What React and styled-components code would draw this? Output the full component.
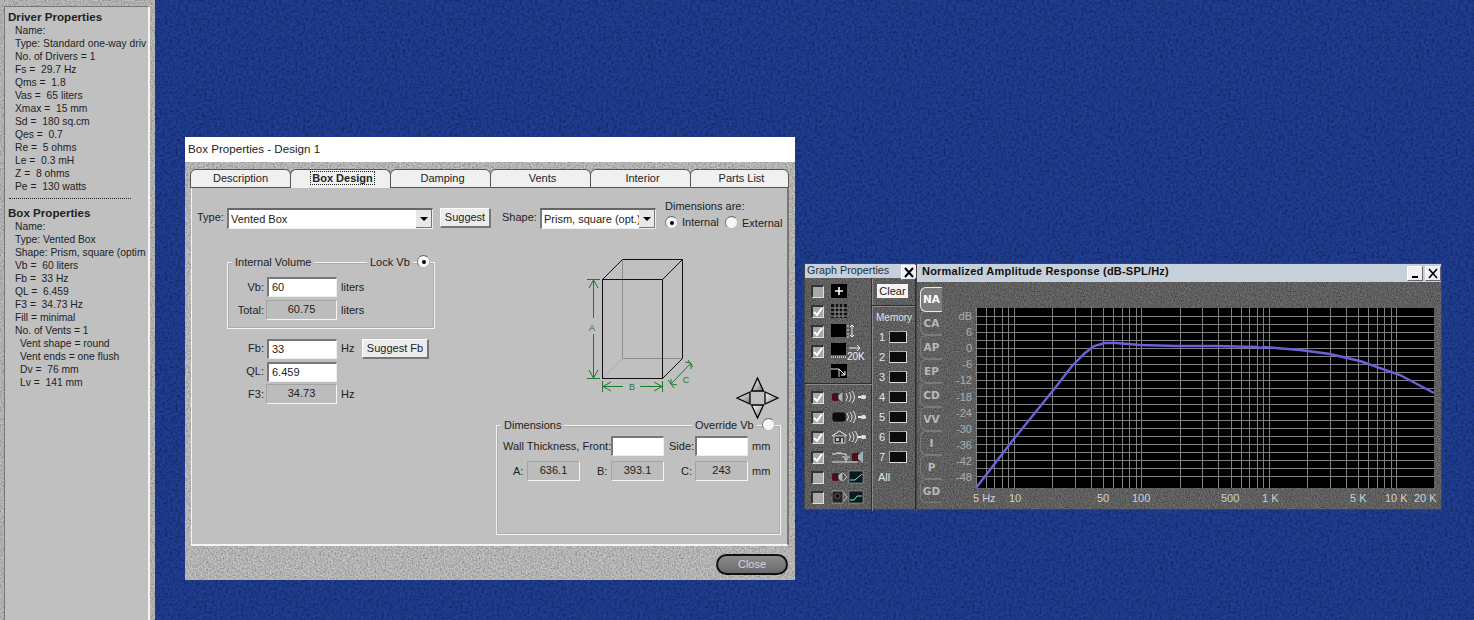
import React from "react";
import styled, { createGlobalStyle, css } from "styled-components";

const noise = (freq, alpha) =>
  `url("data:image/svg+xml,%3Csvg xmlns='http://www.w3.org/2000/svg' width='256' height='256'%3E%3Cfilter id='n'%3E%3CfeTurbulence type='fractalNoise' baseFrequency='${freq}' numOctaves='2' seed='4' stitchTiles='stitch'/%3E%3CfeColorMatrix values='0 0 0 0 0 0 0 0 0 0 0 0 0 0 0 1.6 0 0 0 -0.62'/%3E%3C/filter%3E%3Crect width='256' height='256' filter='url(%23n)' opacity='${alpha}'/%3E%3C/svg%3E")`;

const noiseLight = (freq, alpha) =>
  `url("data:image/svg+xml,%3Csvg xmlns='http://www.w3.org/2000/svg' width='256' height='256'%3E%3Cfilter id='n'%3E%3CfeTurbulence type='fractalNoise' baseFrequency='${freq}' numOctaves='2' seed='9' stitchTiles='stitch'/%3E%3CfeColorMatrix values='0 0 0 0 1 0 0 0 0 1 0 0 0 0 1 1.6 0 0 0 -0.62'/%3E%3C/filter%3E%3Crect width='256' height='256' filter='url(%23n)' opacity='${alpha}'/%3E%3C/svg%3E")`;

const GlobalStyle = createGlobalStyle`
  html, body {
    margin: 0;
    padding: 0;
    overflow: hidden;
  }
  body {
    font-family: "Liberation Sans", Arial, sans-serif;
  }
`;

const at = css`
  position: absolute;
  left: ${({ $x }) => $x}px;
  top: ${({ $y }) => $y}px;
`;

const Desktop = styled.div`
  position: relative;
  width: 1474px;
  height: 620px;
  overflow: hidden;
  background-color: #1f3d92;
  background-image: ${noise(0.38, 0.45)};
`;

/* left properties strip */
const SideFrame = styled.div`
  position: absolute;
  left: 0;
  top: 0;
  width: 155px;
  height: 620px;
  background-color: #b4b4b4;
  background-image: ${noise(0.7, 0.35)}, ${noiseLight(0.7, 0.5)};
`;

const SidePanel = styled.div`
  position: absolute;
  left: 4px;
  top: 6px;
  width: 146px;
  height: 614px;
  box-sizing: border-box;
  padding: 2px 0 0 3px;
  background: #c0c0c0;
  border-left: 1px solid #777;
  border-top: 1px solid #777;
  border-right: 2px solid #f4f4f4;
  overflow: hidden;
`;

const SideHead = styled.div`
  font-size: 11.6px;
  font-weight: bold;
  line-height: 15px;
  color: #222;
  white-space: nowrap;
`;

const SideLine = styled.div`
  font-size: 10.3px;
  line-height: 13px;
  height: 13px;
  color: #222;
  white-space: pre;
  padding-left: ${({ $deep }) => ($deep ? 12 : 7)}px;
`;

const SideRule = styled.div`
  width: 122px;
  margin: 5px 0 6px 1px;
  border-top: 1px dotted #222;
`;

/* box properties dialog */
const Dialog = styled.div`
  position: absolute;
  left: 185px;
  top: 137px;
  width: 610px;
  height: 443px;
  background-color: #b8b8b8;
  background-image: ${noise(0.6, 0.35)}, ${noiseLight(0.6, 0.5)};
`;

const DialogTitle = styled.div`
  height: 25px;
  background: #fff;
  font-size: 11.6px;
  line-height: 24px;
  padding-left: 3px;
  color: #222;
`;

const Tab = styled.div`
  ${at}
  top: 32px;
  width: ${({ $w }) => $w}px;
  height: 19px;
  box-sizing: border-box;
  padding-left: ${({ $shift }) => ($shift ? 4 : 0)}px;
  background: #f0f0f0;
  border: 1px solid #555;
  border-bottom: ${({ $active }) => ($active ? "none" : "1px solid #555")};
  border-radius: 6px 6px 0 0;
  font-size: 11px;
  font-weight: ${({ $active }) => ($active ? "bold" : "normal")};
  line-height: 17px;
  text-align: center;
  color: #222;
  z-index: ${({ $active }) => ($active ? 2 : 1)};
`;

const TabFocus = styled.span`
  border: 1px dotted #222;
  padding: 0 1px;
`;

const TabPanel = styled.div`
  position: absolute;
  left: 6px;
  top: 50px;
  width: 598px;
  height: 359px;
  box-sizing: border-box;
  background: #c0c0c0;
  border: 1px solid #f4f4f4;
  border-top: 1px solid #666;
  border-right: 2px solid #777;
  border-bottom: 2px solid #f4f4f4;
`;

const Layer = styled.div`
  position: absolute;
  left: -192px;
  top: -188px;
  font-size: 11px;
  color: #222;
`;

const Label = styled.span`
  ${at}
  font-size: 11px;
  line-height: 13px;
  white-space: nowrap;
  color: #222;
`;

const RightLabel = styled.span`
  position: absolute;
  left: ${({ $right }) => $right - 60}px;
  top: ${({ $y }) => $y}px;
  width: 60px;
  font-size: 11px;
  line-height: 13px;
  text-align: right;
  white-space: nowrap;
  color: #222;
`;

const Combo = styled.div`
  ${at}
  width: ${({ $w }) => $w}px;
  height: 21px;
  box-sizing: border-box;
  background: #fff;
  border-top: 2px solid #666;
  border-left: 2px solid #777;
  border-right: 1px solid #eee;
  border-bottom: 1px solid #eee;
  font-size: 11px;
  line-height: 18px;
  padding-left: 2px;
  color: #222;
  white-space: nowrap;
  overflow: hidden;
`;

const ComboArrow = styled.div`
  position: absolute;
  right: 0;
  top: 0;
  width: 16px;
  height: 18px;
  box-sizing: border-box;
  background: #e8e8e8;
  border-right: 1px solid #777;
  border-bottom: 1px solid #777;
  &::after {
    content: "";
    position: absolute;
    left: 4px;
    top: 7px;
    border-left: 4px solid transparent;
    border-right: 4px solid transparent;
    border-top: 4px solid #000;
  }
`;

const PushButton = styled.div`
  ${at}
  width: ${({ $w }) => $w}px;
  height: 20px;
  box-sizing: border-box;
  background: #ececec;
  border-top: 1px solid #fff;
  border-left: 1px solid #fff;
  border-right: 2px solid #777;
  border-bottom: 2px solid #777;
  font-size: 11px;
  line-height: 17px;
  text-align: center;
  color: #222;
`;

const Input = styled.div`
  ${at}
  width: ${({ $w }) => $w || 70}px;
  height: 20px;
  box-sizing: border-box;
  background: #fff;
  border-top: 2px solid #777;
  border-left: 2px solid #777;
  border-right: 1px solid #eee;
  border-bottom: 1px solid #eee;
  font-size: 11px;
  line-height: 17px;
  padding-left: 3px;
  color: #222;
`;

const ReadOut = styled.div`
  ${at}
  width: ${({ $w }) => $w || 71}px;
  height: 20px;
  box-sizing: border-box;
  background: #bcbcbc;
  border-top: 1px solid #a4a4a4;
  border-left: 1px solid #a4a4a4;
  border-right: 1px solid #f4f4f4;
  border-bottom: 1px solid #f4f4f4;
  font-size: 11px;
  line-height: 16px;
  text-align: center;
  color: #222;
`;

const Group = styled.div`
  ${at}
  width: ${({ $w }) => $w}px;
  height: ${({ $h }) => $h}px;
  box-sizing: border-box;
  border: 1px solid #f4f4f4;
  outline: 1px solid #acacac;
  outline-offset: -2px;
`;

const GroupLabel = styled.span`
  ${at}
  background: #c0c0c0;
  padding: 0 3px;
  font-size: 11px;
  line-height: 13px;
  white-space: nowrap;
  color: #222;
`;

const Radio = styled.div`
  ${at}
  width: 11px;
  height: 11px;
  border-radius: 50%;
  background: #f6f6f6;
  border: 1px solid #bbb;
  border-top-color: #666;
  border-left-color: #777;
  &::after {
    content: "";
    display: ${({ $on }) => ($on ? "block" : "none")};
    width: 4px;
    height: 4px;
    margin: 3.5px;
    border-radius: 50%;
    background: #000;
  }
`;

const CloseButton = styled.div`
  ${at}
  width: 72px;
  height: 21px;
  box-sizing: border-box;
  border: 2px solid #111;
  border-radius: 11px;
  background: linear-gradient(#8c8c8c, #6a6a6a);
  font-size: 11px;
  line-height: 17px;
  text-align: center;
  color: #d8d8d8;
`;

/* dark graph windows */
const DarkWindow = styled.div`
  ${at}
  width: ${({ $w }) => $w}px;
  height: 247px;
  box-sizing: border-box;
  background-color: #626262;
  background-image: ${noise(0.8, 0.5)}, ${noiseLight(0.7, 0.22)};
  border: 1px solid #444;
`;

const DarkTitle = styled.div`
  height: ${({ $h }) => $h}px;
  background: #c6d0da;
  font-size: ${({ $bold }) => ($bold ? 11 : 10.8)}px;
  line-height: ${({ $h, $bold }) => ($bold ? $h - 3 : $h - 2)}px;
  font-weight: ${({ $bold }) => ($bold ? "bold" : "normal")};
  letter-spacing: ${({ $bold }) => ($bold ? "0.22px" : "0")};
  padding-left: ${({ $bold }) => ($bold ? 5 : 2)}px;
  color: ${({ $bold }) => ($bold ? "#111" : "#1c3040")};
  white-space: nowrap;
`;

const CornerButton = styled.div`
  ${at}
  width: 16px;
  height: 15px;
  box-sizing: border-box;
  background: #eef0f2;
  border: 1px solid #fff;
  border-right-color: #667;
  border-bottom-color: #667;
  color: #000;
  svg {
    display: block;
  }
`;

const Divider = styled.div`
  ${at}
  width: ${({ $w }) => $w || 1}px;
  height: ${({ $h }) => $h || 1}px;
  background: #2e2e2e;
  box-shadow: 1px 1px 0 #8a8a8a;
`;

const Check = styled.div`
  ${at}
  left: 6px;
  width: 13px;
  height: 13px;
  box-sizing: border-box;
  background: #a8a8a8;
  border-top: 2px solid #333;
  border-left: 2px solid #333;
  border-right: 1px solid #ddd;
  border-bottom: 1px solid #ddd;
  svg {
    display: block;
  }
`;

const ClearButton = styled.div`
  ${at}
  width: 31px;
  height: 14px;
  background: #f4f4f4;
  font-size: 11px;
  line-height: 14px;
  text-align: center;
  color: #222;
`;

const DarkText = styled.span`
  ${at}
  font-size: ${({ $size }) => $size || 11}px;
  line-height: 13px;
  color: #e4e4e4;
  white-space: nowrap;
`;

const MemorySlot = styled.div`
  ${at}
  width: 18px;
  height: 12px;
  box-sizing: border-box;
  background: #0c0c0c;
  border: 1px solid #aaa;
  border-right-color: #ddd;
  border-bottom-color: #ddd;
`;

const GraphIcon = styled.svg`
  ${at}
  display: block;
`;

const SideTab = styled.div`
  ${at}
  left: 3px;
  width: 22px;
  height: ${({ $active }) => ($active ? 25 : 24)}px;
  box-sizing: border-box;
  background: ${({ $active }) => ($active ? "#7c7c7c" : "transparent")};
  border: 1px solid ${({ $active }) => ($active ? "#e8e8e8" : "#7a7a7a")};
  border-right: none;
  border-radius: 6px 0 0 6px;
  font-family: "DejaVu Sans", sans-serif;
  font-size: 10.5px;
  font-weight: bold;
  line-height: 22px;
  text-align: center;
  color: ${({ $active }) => ($active ? "#fff" : "#b8b8b8")};
  z-index: ${({ $active }) => ($active ? 2 : 1)};
`;

const AxisY = styled.span`
  position: absolute;
  left: 20px;
  top: ${({ $y }) => $y}px;
  width: 35px;
  text-align: right;
  font-size: 11px;
  line-height: 13px;
  color: #adadad;
`;

const AxisX = styled.span`
  position: absolute;
  left: ${({ $x }) => $x}px;
  top: 228px;
  font-size: 11px;
  line-height: 13px;
  color: #cfcfcf;
  white-space: nowrap;
`;

const PlotBox = styled.svg`
  position: absolute;
  left: 59px;
  top: 44px;
  display: block;
  background: #000;
`;

const driverLines = [
  "Name:",
  "Type: Standard one-way driv",
  "No. of Drivers = 1",
  "Fs =  29.7 Hz",
  "Qms =  1.8",
  "Vas =  65 liters",
  "Xmax =  15 mm",
  "Sd =  180 sq.cm",
  "Qes =  0.7",
  "Re =  5 ohms",
  "Le =  0.3 mH",
  "Z =  8 ohms",
  "Pe =  130 watts",
];

const boxLines = [
  "Name:",
  "Type: Vented Box",
  "Shape: Prism, square (optim",
  "Vb =  60 liters",
  "Fb =  33 Hz",
  "QL =  6.459",
  "F3 =  34.73 Hz",
  "Fill = minimal",
  "No. of Vents = 1",
];

const ventLines = ["Vent shape = round", "Vent ends = one flush", "Dv =  76 mm", "Lv =  141 mm"];

const tabs = [
  { name: "Description", x: 5, w: 101 },
  { name: "Box Design", x: 105, w: 101, active: true, shift: true },
  { name: "Damping", x: 205, w: 101, shift: true },
  { name: "Vents", x: 305, w: 101, shift: true },
  { name: "Interior", x: 405, w: 101, shift: true },
  { name: "Parts List", x: 505, w: 99, shift: true },
];

const checks = [
  { y: 21, on: false },
  { y: 41, on: true },
  { y: 61, on: true },
  { y: 81, on: true },
  { y: 127, on: true },
  { y: 147, on: true },
  { y: 167, on: true },
  { y: 187, on: true },
  { y: 207, on: false },
  { y: 227, on: false },
];

const graphTabs = ["NA", "CA", "AP", "EP", "CD", "VV", "I", "P", "GD"];
const dbLabels = ["dB", "6", "0", "-6", "-12", "-18", "-24", "-30", "-36", "-42", "-48"];

const xLabels = [
  { t: "5 Hz", x: 56 },
  { t: "10", x: 92 },
  { t: "50", x: 180 },
  { t: "100", x: 215 },
  { t: "500", x: 304 },
  { t: "1 K", x: 345 },
  { t: "5 K", x: 433 },
  { t: "10 K", x: 468 },
  { t: "20 K", x: 497 },
];

const freqs = [];
[1, 10, 100, 1000, 10000].forEach((d) => {
  [1, 2, 3, 4, 5, 6, 7, 8, 9].forEach((m) => {
    const f = d * m;
    if (f >= 5 && f <= 20000) freqs.push(f);
  });
});

const freqX = (f) => (Math.log10(f) - Math.log10(5)) * 127.5;

const curve =
  "0,180 37,132 79,80 96,58 109,45 118,38 129,35 140,35 164,37 200,38 240,38 281,39 284,40 288,39 324,42 354,46 384,53 424,67 458,85";

const Tick = () => (
  <svg width="10" height="10" viewBox="0 0 10 10">
    <polyline points="1,5 4,8 9,1" fill="none" stroke="#fff" strokeWidth="2" />
  </svg>
);

const Speaker = ({ x }) => (
  <g transform={`translate(${x},0)`}>
    <rect x="0" y="3" width="7" height="8" rx="2" fill="#4a0f18" />
    <polygon points="6,5 11,1 11,13 6,9" fill="#aab4b8" stroke="#111" strokeWidth="0.6" />
  </g>
);

const Waves = ({ x }) => (
  <g fill="none" stroke="#eee" strokeWidth="0.9" transform={`translate(${x},0)`}>
    <path d="M0 3q3 4 0 8" />
    <path d="M3 2q4 5 0 10" />
    <path d="M6 1q5 6 0 12" />
  </g>
);

const Plug = ({ x }) => (
  <g transform={`translate(${x},0)`}>
    <rect x="0" y="6" width="3" height="2" fill="#eee" />
    <rect x="3" y="5" width="5" height="4" rx="1.5" fill="#ddd" />
  </g>
);

const MiniGraph = ({ x, step }) => (
  <g transform={`translate(${x},0)`}>
    <rect x="0" y="1" width="14" height="12" fill="#0c1a1c" stroke="#bbb" strokeWidth="0.5" />
    <polyline
      points={step ? "1,10 5,10 8,6 13,6" : "1,10 6,10 13,4"}
      fill="none"
      stroke="#7fe0d0"
      strokeWidth="1"
    />
  </g>
);

const BoxDrawing = () => (
  <GraphIcon $x={585} $y={250} width="115" height="150" viewBox="585 250 115 150">
    <g fill="none" stroke="#8c8c8c" strokeWidth="1">
      <path d="M622.5 259.5V358.5H682.5" />
      <path d="M622.5 358.5L602.5 378.5" stroke="#a8a8a8" />
    </g>
    <g fill="none" stroke="#111" strokeWidth="1">
      <rect x="602.5" y="279.5" width="60" height="99" />
      <path d="M602.5 279.5L622.5 259.5H682.5V358.5L662.5 378.5" />
      <path d="M662.5 279.5L682.5 259.5" />
    </g>
    <g fill="none" stroke="#1d7a2c" strokeWidth="1">
      <path d="M587 279.5H600M587 378.5H600" />
      <path d="M593.5 280V318M593.5 334V378" />
      <path d="M589 288L593.5 280L598 288M589 370L593.5 378L598 370" />
      <path d="M602.5 381V392M662.5 381V392" />
      <path d="M603 386.5H623M640 386.5H662" />
      <path d="M611 382L603 386.5L611 391M654 382L662 386.5L654 391" />
      <path d="M671 384L691 363" />
      <path d="M671 379L671 384L677 385M685 362L691 363L691 369" />
      <path d="M668 380L674 388M688 360L693 367" />
    </g>
    <g fill="#1d7a2c" fontFamily="Liberation Sans, sans-serif" fontSize="9" textAnchor="middle">
      <text x="592" y="331">A</text>
      <text x="632" y="390">B</text>
      <text x="686" y="383">C</text>
    </g>
  </GraphIcon>
);

const NavArrows = () => (
  <GraphIcon $x={735} $y={376} width="45" height="44" viewBox="735 376 45 44">
    <defs>
      <linearGradient id="navUp" x1="0" y1="0" x2="1" y2="1">
        <stop offset="0" stopColor="#fff" />
        <stop offset="1" stopColor="#777" />
      </linearGradient>
    </defs>
    <g fill="url(#navUp)" stroke="#000" strokeWidth="1.3">
      <polygon points="757.5,378 751.5,391 763.5,391" />
      <polygon points="757.5,418 751.5,405 763.5,405" />
      <polygon points="737,398 750,392 750,404" />
      <polygon points="778,398 765,392 765,404" />
    </g>
  </GraphIcon>
);

const PlotChart = () => (
  <PlotBox width="458" height="180" viewBox="0 0 458 180">
    <g stroke="#808080" strokeWidth="1" shapeRendering="crispEdges">
      {Array.from({ length: 21 }, (_, i) => (
        <line key={i} x1="0" x2="458" y1={8 * (i + 1) + 0.5} y2={8 * (i + 1) + 0.5} />
      ))}
      {freqs.map((f) => (
        <line key={f} x1={freqX(f)} x2={freqX(f)} y1="0" y2="180" />
      ))}
    </g>
    <polyline points={curve} fill="none" stroke="#6a62d8" strokeWidth="2.4" />
  </PlotBox>
);

const GraphIcons = () => (
  <>
    <GraphIcon $x={26} $y={20} width="16" height="14" viewBox="0 0 16 14">
      <rect width="16" height="14" fill="#000" />
      <path d="M8 3V11M4 7H12" stroke="#fff" strokeWidth="1.6" />
    </GraphIcon>
    <GraphIcon $x={26} $y={40} width="16" height="14" viewBox="0 0 16 14">
      <rect width="16" height="14" fill="#111" />
      <path d="M0 4H16M0 8H16M0 12H16M4 0V14M8 0V14M12 0V14" stroke="#999" strokeWidth="1" />
    </GraphIcon>
    <GraphIcon $x={26} $y={60} width="24" height="14" viewBox="0 0 24 14">
      <rect width="15" height="13" fill="#000" />
      <path d="M16 2h2M16 6h2M16 10h2M16 13h2" stroke="#ddd" strokeWidth="1" />
      <path d="M21 1V13M19 3L21 1L23 3M19 11L21 13L23 11" stroke="#eee" fill="none" strokeWidth="1" />
    </GraphIcon>
    <GraphIcon $x={26} $y={79} width="34" height="18" viewBox="0 0 34 18">
      <rect width="15" height="12" fill="#000" />
      <path d="M0 14H15" stroke="#ddd" strokeWidth="1.5" strokeDasharray="1 1" />
      <path d="M18 5H29M26 2L29 5L26 8" stroke="#eee" fill="none" strokeWidth="1" />
      <text x="16" y="17" fontSize="10" fill="#eee" fontFamily="Liberation Sans, sans-serif">
        20K
      </text>
    </GraphIcon>
    <GraphIcon $x={26} $y={100} width="16" height="14" viewBox="0 0 16 14">
      <rect width="16" height="14" fill="#000" />
      <path d="M0 5H8V13" stroke="#ddd" fill="none" strokeWidth="1" />
      <path d="M8 5L14 11M14 7V11H10" stroke="#fff" fill="none" strokeWidth="1" />
    </GraphIcon>

    <GraphIcon $x={27} $y={126} width="36" height="14" viewBox="0 0 36 14">
      <Speaker x={0} />
      <Waves x={14} />
      <Plug x={26} />
    </GraphIcon>
    <GraphIcon $x={27} $y={146} width="36" height="14" viewBox="0 0 36 14">
      <rect x="0" y="2" width="14" height="10" rx="3" fill="#0c0c0c" stroke="#777" strokeWidth="0.6" />
      <Waves x={15} />
      <Plug x={26} />
    </GraphIcon>
    <GraphIcon $x={27} $y={166} width="36" height="14" viewBox="0 0 36 14">
      <path d="M0 6L7.5 1L15 6" fill="none" stroke="#eee" strokeWidth="1" />
      <rect x="2" y="6" width="11" height="7" fill="#333" stroke="#eee" strokeWidth="0.8" />
      <rect x="4" y="8" width="3" height="3" fill="#bbb" />
      <rect x="9" y="8" width="2" height="5" fill="#bbb" />
      <Waves x={17} />
      <Plug x={26} />
    </GraphIcon>
    <GraphIcon $x={27} $y={186} width="36" height="14" viewBox="0 0 36 14">
      <path d="M0 4H4q1-3 2 0q1-3 2 0q1-3 2 0H14M0 12H26M14 4V6M10 7H18M12 9H16M14 9V12" fill="none" stroke="#eee" strokeWidth="0.9" />
      <rect x="20" y="3" width="7" height="8" rx="1" fill="#4a0f18" />
      <polygon points="26,5 31,1 31,13 26,9" fill="#9fb0b4" />
    </GraphIcon>
    <GraphIcon $x={27} $y={206} width="36" height="14" viewBox="0 0 36 14">
      <Speaker x={0} />
      <path d="M11 3L15 7L11 11" fill="none" stroke="#ddd" strokeWidth="0.8" />
      <MiniGraph x={17} />
    </GraphIcon>
    <GraphIcon $x={27} $y={226} width="36" height="14" viewBox="0 0 36 14">
      <rect x="0" y="1" width="11" height="12" fill="#222" stroke="#ccc" strokeWidth="0.6" />
      <circle cx="5.5" cy="6" r="2.5" fill="#000" stroke="#999" strokeWidth="0.6" />
      <path d="M12 3L15 7L12 11" fill="none" stroke="#ddd" strokeWidth="0.8" />
      <MiniGraph x={17} step />
    </GraphIcon>
  </>
);

export default function App() {
  return (
    <Desktop>
      <GlobalStyle />

      <SideFrame>
        <SidePanel>
          <SideHead>Driver Properties</SideHead>
          {driverLines.map((l, i) => (
            <SideLine key={i}>{l}</SideLine>
          ))}
          <SideRule />
          <SideHead>Box Properties</SideHead>
          {boxLines.map((l, i) => (
            <SideLine key={i}>{l}</SideLine>
          ))}
          {ventLines.map((l, i) => (
            <SideLine key={i} $deep>
              {l}
            </SideLine>
          ))}
        </SidePanel>
      </SideFrame>

      <Dialog>
        <DialogTitle>Box Properties - Design 1</DialogTitle>
        {tabs.map((t) => (
          <Tab key={t.name} $x={t.x} $w={t.w} $active={t.active} $shift={t.shift}>
            {t.active ? <TabFocus>{t.name}</TabFocus> : t.name}
          </Tab>
        ))}
        <TabPanel>
          <Layer>
            <Label $x={197} $y={211}>Type:</Label>
            <Combo $x={227} $y={208} $w={206}>
              Vented Box
              <ComboArrow />
            </Combo>
            <PushButton $x={440} $y={208} $w={51}>Suggest</PushButton>

            <Label $x={502} $y={211}>Shape:</Label>
            <Combo $x={540} $y={208} $w={116}>
              Prism, square (opt.)
              <ComboArrow />
            </Combo>
            <Label $x={665} $y={200}>Dimensions are:</Label>
            <Radio $x={665} $y={216} $on />
            <Label $x={682} $y={216}>Internal</Label>
            <Radio $x={725} $y={216} />
            <Label $x={742} $y={217}>External</Label>

            <Group $x={227} $y={262} $w={208} $h={67} />
            <GroupLabel $x={232} $y={256}>Internal Volume</GroupLabel>
            <GroupLabel $x={367} $y={256}>Lock Vb</GroupLabel>
            <Radio $x={417} $y={255} $on />
            <RightLabel $right={264} $y={281}>Vb:</RightLabel>
            <Input $x={267} $y={277}>60</Input>
            <Label $x={341} $y={281}>liters</Label>
            <RightLabel $right={264} $y={304}>Total:</RightLabel>
            <ReadOut $x={266} $y={300}>60.75</ReadOut>
            <Label $x={341} $y={304}>liters</Label>

            <RightLabel $right={264} $y={342}>Fb:</RightLabel>
            <Input $x={267} $y={339}>33</Input>
            <Label $x={341} $y={342}>Hz</Label>
            <PushButton $x={362} $y={339} $w={67}>Suggest Fb</PushButton>
            <RightLabel $right={264} $y={365}>QL:</RightLabel>
            <Input $x={267} $y={362}>6.459</Input>
            <RightLabel $right={264} $y={388}>F3:</RightLabel>
            <ReadOut $x={266} $y={384}>34.73</ReadOut>
            <Label $x={341} $y={388}>Hz</Label>

            <BoxDrawing />
            <NavArrows />

            <Group $x={496} $y={425} $w={285} $h={110} />
            <GroupLabel $x={501} $y={419}>Dimensions</GroupLabel>
            <GroupLabel $x={692} $y={419}>Override Vb</GroupLabel>
            <Radio $x={762} $y={418} />
            <Label $x={503} $y={440}>Wall Thickness, Front:</Label>
            <Input $x={611} $y={436} $w={53} />
            <Label $x={669} $y={440}>Side:</Label>
            <Input $x={695} $y={436} $w={53} />
            <Label $x={752} $y={440}>mm</Label>
            <Label $x={513} $y={465}>A:</Label>
            <ReadOut $x={527} $y={461} $w={53}>636.1</ReadOut>
            <Label $x={597} $y={465}>B:</Label>
            <ReadOut $x={611} $y={461} $w={53}>393.1</ReadOut>
            <Label $x={681} $y={465}>C:</Label>
            <ReadOut $x={695} $y={461} $w={53}>243</ReadOut>
            <Label $x={752} $y={465}>mm</Label>
          </Layer>
        </TabPanel>
        <CloseButton $x={531} $y={417}>Close</CloseButton>
      </Dialog>

      <DarkWindow $x={804} $y={263} $w={112}>
        <DarkTitle $h={14}>Graph Properties</DarkTitle>
        <CornerButton $x={96} $y={1}>
          <svg width="14" height="13" viewBox="0 0 14 13">
            <path d="M3 2L11 11M11 2L3 11" stroke="#000" strokeWidth="2" />
          </svg>
        </CornerButton>
        {checks.map((c) => (
          <Check key={c.y} $y={c.y}>
            {c.on && <Tick />}
          </Check>
        ))}
        <GraphIcons />
        <Divider $x={66} $y={14} $h={232} />
        <Divider $x={0} $y={119} $w={66} />
        <Divider $x={66} $y={41} $w={44} />
        <Divider $x={110} $y={14} $h={232} />
        <ClearButton $x={72} $y={20}>Clear</ClearButton>
        <DarkText $x={71} $y={47} $size={10}>Memory</DarkText>
        {[1, 2, 3, 4, 5, 6, 7].map((n, i) => (
          <React.Fragment key={n}>
            <DarkText $x={74} $y={67 + i * 20}>{n}</DarkText>
            <MemorySlot $x={84} $y={67 + i * 20} />
          </React.Fragment>
        ))}
        <DarkText $x={73} $y={207}>All</DarkText>
      </DarkWindow>

      <DarkWindow $x={916} $y={263} $w={526}>
        <DarkTitle $h={18} $bold>Normalized Amplitude Response (dB-SPL/Hz)</DarkTitle>
        <CornerButton $x={490} $y={2}>
          <svg width="14" height="13" viewBox="0 0 14 13">
            <path d="M4 10H10" stroke="#000" strokeWidth="2" />
          </svg>
        </CornerButton>
        <CornerButton $x={508} $y={2}>
          <svg width="14" height="13" viewBox="0 0 14 13">
            <path d="M3 2L11 11M11 2L3 11" stroke="#000" strokeWidth="1.6" />
          </svg>
        </CornerButton>
        {graphTabs.map((t, i) => (
          <SideTab key={t} $y={23 + i * 24} $active={i === 0}>
            {t}
          </SideTab>
        ))}
        {dbLabels.map((d, i) => (
          <AxisY key={d} $y={46 + i * 16.1}>{d}</AxisY>
        ))}
        <PlotChart />
        {xLabels.map((l) => (
          <AxisX key={l.t} $x={l.x}>{l.t}</AxisX>
        ))}
      </DarkWindow>
    </Desktop>
  );
}
